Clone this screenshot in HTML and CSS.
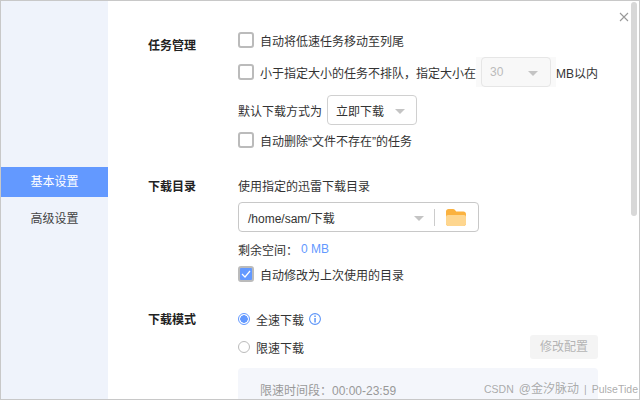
FILE: index.html
```html
<!doctype html>
<html>
    <head>
        <meta charset="utf-8">
        <title>设置</title>
        <link rel="stylesheet" href="styles.css">
    </head>
    <body>
        <div class="window">
            <aside class="sidebar">
                <div class="nav-item active">基本设置</div>
                <div class="nav-item">高级设置</div>
            </aside>
            <main class="main">
                <section class="group group-task">
                    <h2 class="group-title">任务管理</h2>
                    <div class="group-body">
                        <div class="row row-first">
                            <span class="checkbox"></span>
                            <span>自动将低速任务移动至列尾</span>
                        </div>
                        <div class="row row-size">
                            <span class="checkbox"></span>
                            <span>小于指定大小的任务不排队，指定大小在</span>
                            <span class="select-wrap">
                                <span class="select select-disabled">30<i class="arrow"></i></span>
                            </span>
                            <span>MB以内</span>
                        </div>
                        <div class="row row-mode">
                            <span>默认下载方式为</span>
                            <span class="select select-mode">立即下载<i class="arrow"></i></span>
                        </div>
                        <div class="row row-delete">
                            <span class="checkbox"></span>
                            <span>自动删除“文件不存在”的任务</span>
                        </div>
                    </div>
                </section>
                <section class="group group-dir">
                    <h2 class="group-title">下载目录</h2>
                    <div class="group-body">
                        <div class="row row-first">使用指定的迅雷下载目录</div>
                        <div class="path-box">
                            <span class="path-text">/home/sam/下载</span>
                            <i class="arrow"></i>
                            <span class="path-divider"></span>
                            <svg class="folder" width="20" height="17" viewBox="0 0 20 17">
                                <path d="M0 2.5C0 1.1 1.1 0 2.5 0H7c.9 0 1.5.4 2 1l1.2 1.5H17.5C18.900 2.500 20 3.600 20 5v9.500c0 1.400-1.100 2.500-2.500 2.500h-15C1.100 17 0 15.900 0 14.500z" fill="#fbb23f"/>
                                <path d="M0 8c0-1.100.9-2 2-2h16c1.100 0 2 .9 2 2v6.500c0 1.400-1.100 2.500-2.500 2.500h-15C1.100 17 0 15.900 0 14.500z" fill="#fed68f"/>
                            </svg>
                        </div>
                        <div class="row row-space">
                            <span>剩余空间：</span>
                            <span class="space-value">0 MB</span>
                        </div>
                        <div class="row row-auto">
                            <span class="checkbox checked">
                                <svg width="10" height="8" viewBox="0 0 10 8"><path d="M1 4l3 3 5-6" fill="none" stroke="#fff" stroke-width="1.200"/></svg>
                            </span>
                            <span>自动修改为上次使用的目录</span>
                        </div>
                    </div>
                </section>
                <section class="group group-speed">
                    <h2 class="group-title">下载模式</h2>
                    <div class="group-body">
                        <div class="row row-first">
                            <span class="radio checked"></span>
                            <span>全速下载</span>
                            <svg class="info" width="12" height="12" viewBox="0 0 12 12">
                                <circle cx="6" cy="6" r="5.400" fill="none" stroke="#5b94f8" stroke-width="1.100"/>
                                <rect x="5.300" y="2.500" width="1.500" height="1.500" fill="#5b94f8"/>
                                <rect x="5.300" y="5" width="1.500" height="4.500" fill="#5b94f8"/>
                            </svg>
                        </div>
                        <div class="row row-limit">
                            <span class="radio"></span>
                            <span>限速下载</span>
                            <span class="btn-config">修改配置</span>
                        </div>
                        <div class="limit-box">限速时间段：00:00-23:59</div>
                    </div>
                </section>
            </main>
            <div class="close">
                <svg width="10" height="10" viewBox="0 0 10 10"><path d="M1 1l8 8M9 1l-8 8" stroke="#999" stroke-width="1.100" fill="none"/></svg>
            </div>
            <div class="scrollbar"></div>
            <div class="watermark">
                <span>CSDN</span>
                <span class="watermark-name">@金汐脉动</span>
                <span>|</span>
                <span>PulseTide</span>
            </div>
        </div>
    </body>
</html>
```

FILE: styles.css
```css
* {
    box-sizing: border-box;
}
html, body {
    margin: 0;
    height: 100%;
    overflow: hidden;
}
body {
    font-family: "Liberation Sans", "Noto Sans CJK SC", sans-serif;
    font-size: 12px;
    color: #333;
    background: #fff;
}
.window {
    position: relative;
    display: flex;
    width: 640px;
    height: 400px;
    border: 1px solid #c8c8c8;
    overflow: hidden;
    background: #fff;
}
.sidebar {
    flex: none;
    width: 107px;
    padding-top: 166px;
    background: #eff3fb;
}
.nav-item {
    height: 30px;
    margin-bottom: 7px;
    line-height: 30px;
    text-align: center;
    color: #444;
}
.nav-item.active {
    background: #6399ff;
    color: #fff;
}
.main {
    flex: 1;
    padding: 0 41px 0 40px;
    overflow: hidden;
}
.group {
    display: flex;
}
.group-title {
    flex: none;
    width: 90px;
    margin: 0;
    font-size: 12px;
    font-weight: bold;
    color: #222;
}
.group-body {
    flex: 1;
}
.group-task {
    padding-top: 29px;
}
.group-task .group-title {
    padding-top: 6px;
}
.group-dir {
    padding-top: 25px;
}
.group-dir .group-title {
    padding-top: 2px;
    line-height: 20px;
}
.group-speed .group-title {
    padding-top: 1px;
    line-height: 20px;
}
.group-speed {
    padding-top: 25px;
}
.row {
    display: flex;
    align-items: center;
    height: 20px;
    white-space: nowrap;
}
.row-size {
    height: 30px;
    margin-top: 7px;
}
.row-mode {
    height: 30px;
    margin-top: 8px;
}
.row-delete {
    margin-top: 5px;
}
.row-space {
    margin-top: 7px;
}
.row-auto {
    margin-top: 5px;
}
.row-limit {
    margin-top: 6px;
    height: 24px;
}
.checkbox {
    flex: none;
    display: flex;
    align-items: center;
    justify-content: center;
    width: 16px;
    height: 16px;
    margin-right: 6px;
    border: 2px solid #bbb;
    border-radius: 3px;
}
.checkbox.checked {
    background: #6399ff;
}
.select {
    display: inline-flex;
    align-items: center;
    justify-content: space-between;
    height: 30px;
    border: 1px solid #d0d0d0;
    border-radius: 4px;
}
.select-wrap {
    flex: none;
    display: inline-flex;
    padding: 0 5px;
    background: #f9f9f9;
}
.select-disabled {
    width: 70px;
    padding: 0 12px 0 8px;
    border-color: #e6e6e6;
    background: #f8f8f8;
    color: #bbb;
}
.select-mode {
    width: 90px;
    margin-left: 5px;
    padding: 0 11px 0 8px;
}
.arrow {
    display: inline-block;
    width: 0;
    height: 0;
    border-left: 5px solid transparent;
    border-right: 5px solid transparent;
    border-top: 5px solid #c4c4c4;
    margin-top: 3px;
}
.path-box {
    display: flex;
    align-items: center;
    width: 241px;
    height: 30px;
    margin-top: 7px;
    padding: 0 12px 0 9px;
    border: 1px solid #c8c8c8;
    border-radius: 4px;
}
.path-text {
    flex: 1;
}
.path-divider {
    width: 1px;
    height: 17px;
    margin: 0 11px 0 10px;
    background: #ccc;
}
.space-value {
    margin-left: 3px;
    color: #6399ff;
}
.radio {
    flex: none;
    width: 12px;
    height: 12px;
    margin-right: 6px;
    border: 1px solid #bbb;
    border-radius: 50%;
}
.radio.checked {
    border-color: #6399ff;
    background: radial-gradient(circle, #6399ff 0 3.500px, #fff 4px);
}
.info {
    margin-left: 5px;
}
.btn-config {
    margin-left: auto;
    width: 68px;
    height: 24px;
    line-height: 24px;
    text-align: center;
    border-radius: 3px;
    background: #f4f4f4;
    color: #b4b4b4;
}
.limit-box {
    height: 60px;
    margin-top: 9px;
    padding: 13px 22px;
    border-radius: 4px;
    background: #f4f6fb;
    color: #999;
}
.close {
    position: absolute;
    top: 11px;
    left: 618px;
    line-height: 0;
}
.scrollbar {
    position: absolute;
    top: 1px;
    left: 630px;
    width: 6px;
    height: 214px;
    border-radius: 3px;
    background: #d8d8d8;
}
.watermark {
    position: absolute;
    top: 381px;
    left: 483px;
    display: flex;
    gap: 5px;
    white-space: nowrap;
    font-size: 10.500px;
    line-height: 15px;
    color: rgba(150, 150, 150, 0.8);
}
.watermark-name {
    font-size: 12px;
}
```
